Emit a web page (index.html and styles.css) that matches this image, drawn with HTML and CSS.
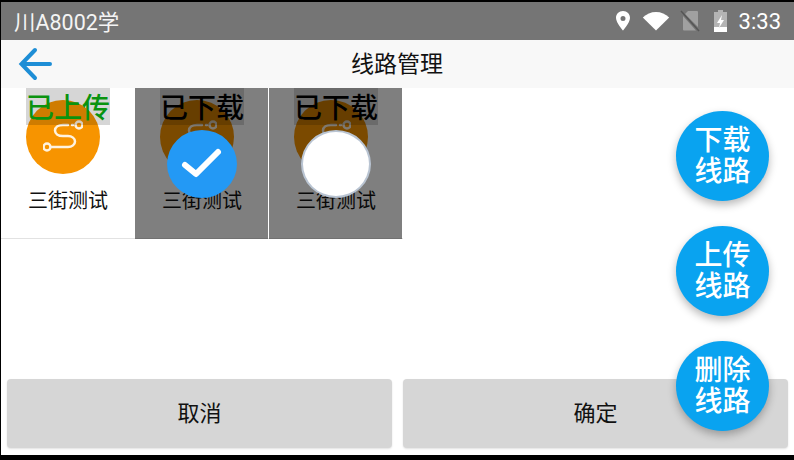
FILE: index.html
```html
<!DOCTYPE html>
<html lang="zh-CN">
<head>
  <meta charset="UTF-8" />
  <title>线路管理</title>
  <link rel="stylesheet" href="styles.css">
</head>
<body>
  <div class="screen">
    <div class="status-bar">
      <span class="plate">川A8002学</span>
      <div class="status-icons">
        <svg class="ic-pin" width="16" height="22" viewBox="0 0 16 22"><path fill="#fff" fill-rule="evenodd" d="M8 1C3.900 1 1 4.100 1 8c0 4.600 7 12.500 7 12.500S15 12.600 15 8c0-3.900-2.900-7-7-7zm0 5a2.500 2.500 0 1 1 0 5 2.500 2.500 0 0 1 0-5z"/></svg>
        <svg class="ic-wifi" width="28" height="20" viewBox="0 0 28 20"><path fill="#fff" d="M14 19.500 .8 6.500C4.400 3 9 1 14 1s9.600 2 13.200 5.500z"/></svg>
        <svg class="ic-sim" width="20" height="22" viewBox="0 0 20 22"><path fill="#a0a0a0" d="M8 1h9a1 1 0 0 1 1 1v15L5 4zM3 6l13 14.500H4a1 1 0 0 1-1-1z"/><path stroke="#555" stroke-width="1.500" d="M1 1l18 20"/></svg>
        <svg class="ic-batt" width="15" height="24" viewBox="0 0 15 24"><path fill="#b4b4b4" d="M5 1h5v2h4v20H1V3h4z"/><path fill="#fff" d="M1 18h13v5H1zM9 6 4 14h3l-1 5 5-8H8z"/></svg>
        <span class="clock">3:33</span>
      </div>
    </div>

    <div class="nav-bar">
      <svg class="back" width="34" height="34" viewBox="0 0 34 34"><path fill="none" stroke="#1e8ed6" stroke-width="4" stroke-linecap="round" d="M17 3 3.500 17 17 31M5 17h27"/></svg>
      <h1 class="title">线路管理</h1>
    </div>

    <div class="content">
      <div class="route-grid">
        <div class="route">
          <span class="tag tag-up">已上传</span>
          <div class="route-icon">
            <svg width="40" height="40" viewBox="0 0 40 40"><path fill="none" stroke="#fff3df" stroke-width="2.500" stroke-linecap="round" d="M30 8h-1M25 8h-5c-5 0-8 2.500-8 5.500s3 5.500 8 5.500h5c4 0 7 2.500 7 5.500S29 30 25 30H9"/><circle cx="36" cy="8" r="3.500" fill="none" stroke="#fff3df" stroke-width="2.500"/><circle cx="4" cy="30" r="3.500" fill="none" stroke="#fff3df" stroke-width="2.500"/></svg>
          </div>
          <span class="route-name">三街测试</span>
        </div>
        <div class="route">
          <span class="tag">已下载</span>
          <div class="route-icon">
            <svg width="40" height="40" viewBox="0 0 40 40"><path fill="none" stroke="#fff3df" stroke-width="2.500" stroke-linecap="round" d="M30 8h-1M25 8h-5c-5 0-8 2.500-8 5.500s3 5.500 8 5.500h5c4 0 7 2.500 7 5.500S29 30 25 30H9"/><circle cx="36" cy="8" r="3.500" fill="none" stroke="#fff3df" stroke-width="2.500"/><circle cx="4" cy="30" r="3.500" fill="none" stroke="#fff3df" stroke-width="2.500"/></svg>
          </div>
          <span class="route-name">三街测试</span>
          <div class="mask">
            <div class="pick pick-on">
              <svg width="44" height="36" viewBox="0 0 44 36"><path fill="none" stroke="#fff" stroke-width="6" stroke-linecap="round" stroke-linejoin="round" d="M5 19l11 9L38 6"/></svg>
            </div>
          </div>
        </div>
        <div class="route">
          <span class="tag">已下载</span>
          <div class="route-icon">
            <svg width="40" height="40" viewBox="0 0 40 40"><path fill="none" stroke="#fff3df" stroke-width="2.500" stroke-linecap="round" d="M30 8h-1M25 8h-5c-5 0-8 2.500-8 5.500s3 5.500 8 5.500h5c4 0 7 2.500 7 5.500S29 30 25 30H9"/><circle cx="36" cy="8" r="3.500" fill="none" stroke="#fff3df" stroke-width="2.500"/><circle cx="4" cy="30" r="3.500" fill="none" stroke="#fff3df" stroke-width="2.500"/></svg>
          </div>
          <span class="route-name">三街测试</span>
          <div class="mask">
            <div class="pick pick-off"></div>
          </div>
        </div>
      </div>

      <div class="fab-list">
        <button class="fab">下载<br>线路</button>
        <button class="fab">上传<br>线路</button>
        <button class="fab">删除<br>线路</button>
      </div>

      <div class="actions">
        <button class="action">取消</button>
        <button class="action">确定</button>
      </div>
    </div>
  </div>
</body>
</html>
```

FILE: styles.css
```css
html, body {
  margin: 0;
  padding: 0;
  background: #000;
}
body {
  width: 794px;
  height: 460px;
  overflow: hidden;
  font-family: "Noto Sans CJK SC", "Liberation Sans", sans-serif;
}
.screen {
  box-sizing: border-box;
  height: 453px;
  margin-top: 2px;
  margin-left: 1px;
  display: flex;
  flex-direction: column;
  background: #fff;
}
.status-bar {
  height: 38px;
  flex: none;
  display: flex;
  align-items: center;
  justify-content: space-between;
  padding: 0 13px 0 13px;
  background: #757575;
  color: #fff;
}
.plate {
  font-family: "Roboto", "Noto Sans CJK SC", sans-serif;
  font-size: 21.5px;
  color: #f4f4f4;
  margin-bottom: 2px;
}
.status-icons {
  display: flex;
  align-items: center;
}
.ic-pin { margin-right: 11px; }
.ic-wifi { margin-right: 10px; }
.ic-sim { margin-right: 13px; }
.ic-batt { margin-right: 11px; }
.clock {
  font-family: "Roboto", sans-serif;
  font-size: 22px;
}
.nav-bar {
  height: 48px;
  flex: none;
  display: flex;
  align-items: center;
  position: relative;
  background: #f8f8f8;
}
.back {
  margin-left: 17px;
}
.title {
  position: absolute;
  left: 0;
  right: 0;
  margin: 0;
  padding-bottom: 4px;
  padding-right: 1px;
  text-align: center;
  font-size: 23px;
  font-weight: 400;
  color: #111;
}
.content {
  flex: 1;
  position: relative;
  display: flex;
  flex-direction: column;
  justify-content: space-between;
}
.route-grid {
  display: flex;
}
.route {
  box-sizing: border-box;
  width: 134px;
  height: 151px;
  padding-top: 12px;
  position: relative;
  display: flex;
  flex-direction: column;
  align-items: center;
  border-bottom: 1px solid #e2e2e2;
}
.route-icon {
  width: 74px;
  height: 74px;
  margin-right: 11px;
  flex: none;
  display: flex;
  align-items: center;
  justify-content: center;
  border-radius: 50%;
  background: #f79400;
}
.route-name {
  margin-top: 11px;
  font-size: 20px;
  line-height: 30px;
  color: #111;
}
.tag {
  position: absolute;
  top: 0;
  left: 25px;
  width: 84px;
  height: 37px;
  z-index: 1;
  text-align: center;
  white-space: nowrap;
  font-size: 28px;
  font-weight: 500;
  line-height: 37px;
  color: #000;
  background: rgba(0, 0, 0, 0.16);
}
.tag-up {
  color: #0a930f;
}
.mask {
  position: absolute;
  left: 0;
  right: 1px;
  top: 0;
  bottom: -1px;
  z-index: 2;
  background: rgba(0, 0, 0, 0.5);
}
.pick {
  position: absolute;
  left: 32px;
  top: 42px;
  box-sizing: border-box;
  width: 70px;
  height: 68px;
  border-radius: 50%;
  display: flex;
  align-items: center;
  justify-content: center;
}
.pick-on {
  background: #2399f5;
}
.pick-off {
  background: #fff;
  border: 2px solid #b9c4d2;
}
.fab-list {
  position: absolute;
  left: 675px;
  top: 23px;
  z-index: 3;
  display: flex;
  flex-direction: column;
  gap: 25px;
}
.fab {
  width: 93px;
  height: 90px;
  padding: 0 0 4px;
  border: none;
  border-radius: 50%;
  background: #09a3f0;
  color: #fff;
  font-family: inherit;
  font-size: 28px;
  font-weight: 500;
  line-height: 31px;
  box-shadow: 0 4px 8px rgba(0, 0, 0, 0.28);
}
.actions {
  display: flex;
  gap: 11px;
  padding: 0 6px 7px 6px;
}
.action {
  flex: 1;
  height: 69px;
  padding: 0 0 5px;
  border: none;
  border-radius: 4px;
  background: #d6d6d6;
  color: #111;
  font-family: inherit;
  font-size: 22px;
  box-shadow: 0 1px 2px rgba(0, 0, 0, 0.12);
}
```
